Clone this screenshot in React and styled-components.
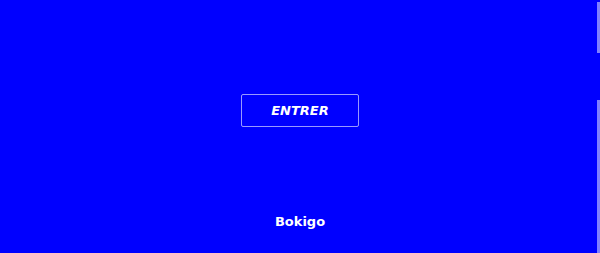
import React from 'react';
import styled, { createGlobalStyle } from 'styled-components';

const GlobalStyle = createGlobalStyle`
    html, body {
        margin: 0;
        padding: 0;
        background-color: #0000FF;
    }
    body {
        font-family: "DejaVu Sans", Verdana, sans-serif;
        color: #FFFFFF;
        overflow: hidden;
    }
`

const Page = styled.div`
    position: relative;
    height: 100vh;
    display: flex;
    flex-direction: column;
    background-color: #0000FF;
`

const Main = styled.main`
    flex: 1;
    display: flex;
    align-items: center;
    justify-content: center;
    padding-top: 7px;
`

const EnterButton = styled.button`
    width: 118px;
    height: 33px;
    background: transparent;
    border: 1px solid rgba(255, 255, 255, 0.6);
    border-radius: 2px;
    color: #FFFFFF;
    font-family: "DejaVu Sans", Verdana, sans-serif;
    font-size: 13px;
    font-weight: 700;
    font-style: italic;
    cursor: pointer;
    padding: 0;
`

const Footer = styled.footer`
    text-align: center;
    padding-bottom: 23px;
    font-size: 13px;
    font-weight: 700;
    line-height: 16px;
`

const SidePeek = styled.div`
    position: absolute;
    right: 0;
    width: 3px;
    top: ${p => p.top}px;
    bottom: ${p => p.bottom}px;
    background-color: rgba(255, 255, 255, 0.5);
`

const App = () => {
    return (
        <>
            <GlobalStyle />
            <Page>
                <Main>
                    <EnterButton>ENTRER</EnterButton>
                </Main>
                <Footer>Bokigo</Footer>
                <SidePeek top={2} bottom={200} />
                <SidePeek top={100} bottom={0} />
            </Page>
        </>
    )
}

export default App;
